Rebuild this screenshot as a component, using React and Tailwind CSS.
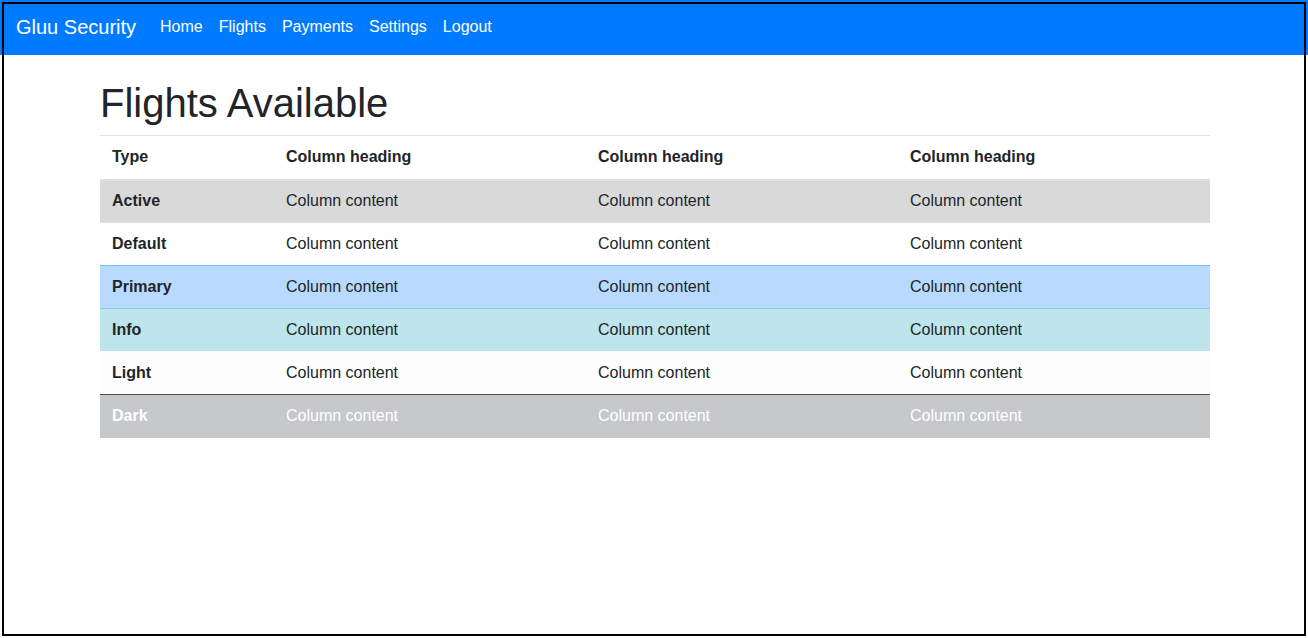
import React from 'react';

const links = ['Home', 'Flights', 'Payments', 'Settings', 'Logout'];

// row styles mirror the contextual table classes
const rows = [
  { type: 'Active', row: 'bg-[#d9d9d9]', border: 'border-[#dee2e6]', text: 'text-[#212529]' },
  { type: 'Default', row: 'bg-white', border: 'border-[#dee2e6]', text: 'text-[#212529]' },
  { type: 'Primary', row: 'bg-[#b8daff]', border: 'border-[#7abaff]', text: 'text-[#212529]' },
  { type: 'Info', row: 'bg-[#bee5eb]', border: 'border-[#86cfda]', text: 'text-[#212529]' },
  { type: 'Light', row: 'bg-[#fdfdfe]', border: 'border-[#fbfcfc]', text: 'text-[#212529]' },
  { type: 'Dark', row: 'bg-[#c6c8ca]', border: 'border-[#454d55]', text: 'text-white' },
];

const Navbar = () => (
  <nav className="flex h-[55px] items-center bg-[#007bff] px-4 pb-[2px]">
    <span className="mr-4 text-[20px] leading-[30px] text-white">Gluu Security</span>
    <div className="flex">
      {links.map((l) => (
        <a key={l} href="#" className="px-2 text-[16px] leading-6 text-white">
          {l}
        </a>
      ))}
    </div>
  </nav>
);

const FlightsTable = () => (
  <table className="w-[1110px] table-fixed border-collapse text-[16px] text-[#212529]">
    <colgroup>
      <col className="w-[174px]" />
      <col className="w-[312px]" />
      <col className="w-[312px]" />
      <col className="w-[312px]" />
    </colgroup>
    <thead>
      <tr className="h-[44px] border-t border-b-2 border-[#dee2e6]">
        <th className="px-3 pb-px text-left font-bold">Type</th>
        <th className="px-3 pb-px text-left font-bold">Column heading</th>
        <th className="px-3 pb-px text-left font-bold">Column heading</th>
        <th className="px-3 pb-px text-left font-bold">Column heading</th>
      </tr>
    </thead>
    <tbody>
      {rows.map((r) => (
        <tr key={r.type} className={`h-[43px] border-t ${r.row} ${r.border} ${r.text}`}>
          <th className="px-3 text-left font-bold">{r.type}</th>
          <td className="px-3">Column content</td>
          <td className="px-3">Column content</td>
          <td className="px-3">Column content</td>
        </tr>
      ))}
    </tbody>
  </table>
);

export default function App() {
  return (
    <div className="min-h-screen bg-white font-['Liberation_Sans',Arial,sans-serif]">
      <Navbar />
      <main className="ml-[100px] w-[1110px]">
        <h1 className="mt-6 mb-2 text-[40px] leading-[48px] font-normal text-[#212529]">
          Flights Available
        </h1>
        <FlightsTable />
      </main>
      <div className="pointer-events-none fixed inset-[2px] border-2 border-black" />
    </div>
  );
}
